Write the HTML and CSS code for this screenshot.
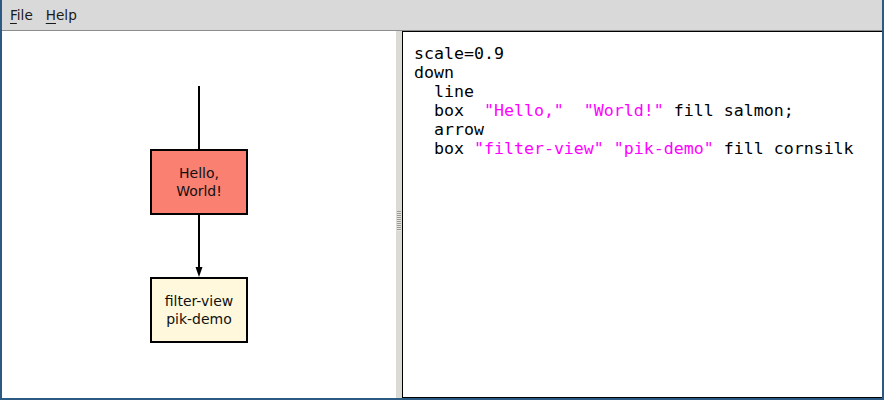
FILE: index.html
```html
<!DOCTYPE html>
<html>
<head>
<meta charset="utf-8">
<link rel="stylesheet" href="styles.css">
</head>
<body>
<div class="window">
  <div class="menubar">
    <span class="menu menu-file"><u>F</u>ile</span>
    <span class="menu menu-help"><u>H</u>elp</span>
  </div>
  <div class="main">
    <div class="canvas-pane">
      <svg class="diagram" width="394" height="366" viewBox="0 0 394 366">
        <line x1="197" y1="55" x2="197" y2="118" stroke="#000" stroke-width="2"/>
        <rect x="149" y="119" width="96" height="64" fill="#fa8072" stroke="#000" stroke-width="2"/>
        <text x="197" y="147" class="dtext">Hello,</text>
        <text x="197" y="165" class="dtext">World!</text>
        <line x1="197" y1="183" x2="197" y2="238" stroke="#000" stroke-width="2"/>
        <polygon points="193.5,236 200.5,236 197,246" fill="#000"/>
        <rect x="149" y="247" width="96" height="64" fill="#fff8dc" stroke="#000" stroke-width="2"/>
        <text x="197" y="275" class="dtext">filter-view</text>
        <text x="197" y="293" class="dtext">pik-demo</text>
      </svg>
    </div>
    <div class="splitter"><div class="grip"></div></div>
    <div class="editor"><pre class="code">scale=0.9
down
  line
  box  <span class="str">"Hello,"</span>  <span class="str">"World!"</span> fill salmon;
  arrow
  box <span class="str">"filter-view"</span> <span class="str">"pik-demo"</span> fill cornsilk</pre></div>
  </div>
</div>
</body>
</html>
```
FILE: styles.css
```css
html, body {
  margin: 0;
  padding: 0;
  width: 884px;
  height: 400px;
  overflow: hidden;
  background: #fff;
}
.window {
  width: 884px;
  height: 400px;
  box-sizing: border-box;
  border-left: 2px solid #2b5a82;
  border-right: 2px solid #2b5a82;
  border-bottom: 2px solid #2b5a82;
  display: flex;
  flex-direction: column;
}
.menubar {
  height: 31px;
  box-sizing: border-box;
  background: #d9d9d9;
  border-bottom: 1px solid #8c8c8c;
  display: flex;
  align-items: center;
  font-family: "DejaVu Sans", sans-serif;
  font-size: 13.6px;
  color: #1a1a1a;
  padding-left: 8px;
  flex: none;
}
.menu u {
  text-decoration-thickness: 1px;
  text-underline-offset: 3px;
}
.menu-file {
  margin-right: 13px;
}
.main {
  flex: 1;
  display: flex;
  min-height: 0;
}
.canvas-pane {
  width: 394px;
  background: #fff;
  flex: none;
  position: relative;
}
.diagram {
  display: block;
}
.dtext {
  font-family: "DejaVu Sans", sans-serif;
  font-size: 14px;
  text-anchor: middle;
  fill: #111;
}
.splitter {
  width: 6px;
  flex: none;
  background: #dcdad5;
  display: flex;
  align-items: center;
  justify-content: center;
}
.grip {
  width: 4px;
  height: 20px;
  margin-top: 12px;
  background: repeating-linear-gradient(to bottom, #9a9893 0px, #9a9893 1px, #e8e6e2 1px, #e8e6e2 2px);
}
.editor {
  flex: 1;
  background: #fff;
  border-top: 1px solid #000;
  border-left: 1px solid #000;
  border-bottom: 1px solid #000;
  box-sizing: border-box;
  padding: 12px 0 0 11px;
  overflow: hidden;
}
.code {
  margin: 0;
  font-family: "DejaVu Sans Mono", monospace;
  font-size: 16.6px;
  line-height: 19px;
  color: #000;
  white-space: pre;
}
.str {
  color: #ff00ff;
}
```
